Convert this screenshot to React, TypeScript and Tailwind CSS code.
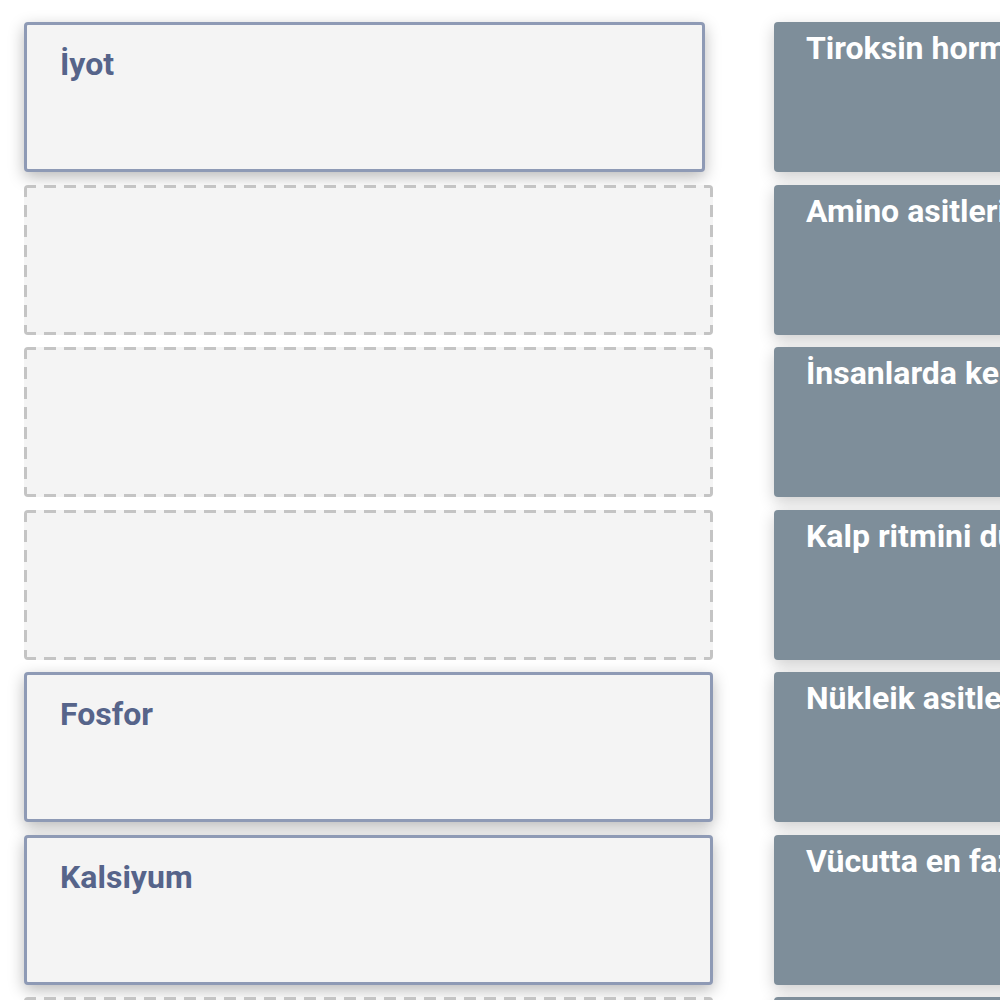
const rows: { answer?: string; prompt: string; narrow?: boolean }[] = [
  { answer: "İyot", prompt: "Tiroksin hormonunun yapısına katılır.", narrow: true },
  { prompt: "Amino asitlerin yapısına katılır." },
  { prompt: "İnsanlarda kemik ve dişlerin yapısına katılır." },
  { prompt: "Kalp ritmini düzenler." },
  { answer: "Fosfor", prompt: "Nükleik asitlerin ve ATP'nin yapısına katılır." },
  { answer: "Kalsiyum", prompt: "Vücutta en fazla bulunan mineraldir." },
  { prompt: "Kanın pıhtılaşmasında görev alır." },
];

const App = () => {
  return (
    <div
      className="h-screen w-screen overflow-hidden bg-white"
      style={{ fontFamily: "Roboto, 'Noto Sans', sans-serif" }}
    >
      <div className="pl-6 pt-[22px] flex flex-col gap-[12.5px] w-[1400px]">
        {rows.map((row, i) => (
          <div key={i} className="flex gap-[61px]">
            {/* drop slot */}
            <div className="w-[689px] h-[150px] shrink-0">
              {row.answer ? (
                <div
                  className={`h-full ${row.narrow ? "w-[681px]" : "w-full"} rounded-[4px] border-[3px] border-[#8e9ab5] bg-[#f4f4f4] pl-[33px] pt-[21px] shadow-[0_5px_16px_rgba(0,0,0,0.28)]`}
                >
                  <span className="text-[32px] font-bold text-[#56648a] leading-[1.17]">
                    {row.answer}
                  </span>
                </div>
              ) : (
                <div className="h-full w-full rounded-[4px] [background:linear-gradient(90deg,#c4c4c4_62%,transparent_0)_0_0/20px_3px_repeat-x,linear-gradient(90deg,#c4c4c4_62%,transparent_0)_0_100%/20px_3px_repeat-x,linear-gradient(180deg,#c4c4c4_62%,transparent_0)_0_0/3px_20px_repeat-y,linear-gradient(180deg,#c4c4c4_62%,transparent_0)_100%_0/3px_20px_repeat-y,#f4f4f4]" />
              )}
            </div>

            {/* prompt card */}
            <div className="w-[620px] h-[150px] shrink-0 rounded-[4px] bg-[#7e8e9a] pl-8 pt-2 shadow-[0_5px_16px_rgba(0,0,0,0.2)]">
              <span className="text-[32px] font-bold text-white leading-[1.17] whitespace-nowrap">
                {row.prompt}
              </span>
            </div>
          </div>
        ))}
      </div>
    </div>
  );
};

export default App;
